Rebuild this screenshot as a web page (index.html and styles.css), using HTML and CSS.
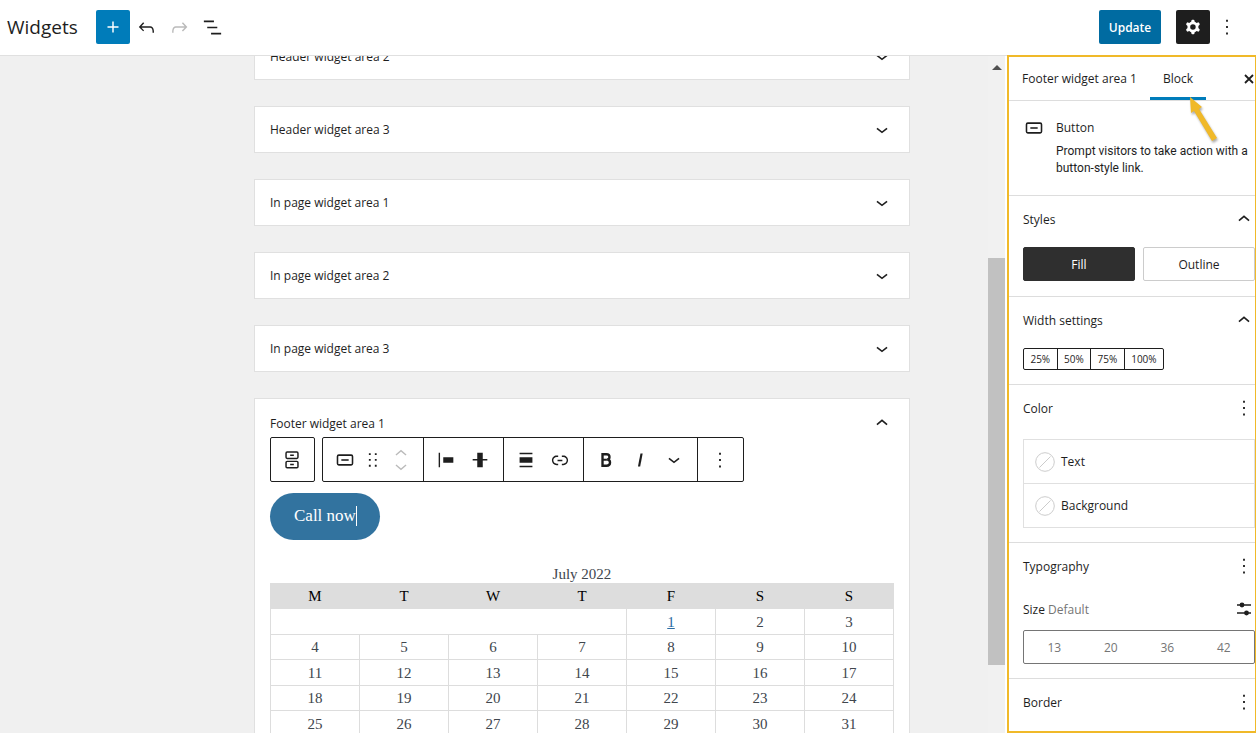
FILE: index.html
```
<!DOCTYPE html>
<html lang="en">
<head>
    <meta charset="UTF-8">
    <meta name="viewport" content="width=device-width, initial-scale=1.0">
    <title>Widgets</title>
    <link rel="stylesheet" href="styles.css">
</head>
<body>
    <header class="topbar">
        <h1>Widgets</h1>
        <button class="square add" aria-label="Add block">
            <svg width="22" height="22" viewBox="0 0 24 24"><path d="M12 6v12M6 12h12" stroke="#fff" stroke-width="1.6"/></svg>
        </button>
        <button class="icon-btn" aria-label="Undo">
            <svg width="23" height="23" viewBox="0 0 24 24"><path d="M18.3 11.7c-.6-.6-1.4-.9-2.3-.9H6.7l2.9-3.3-1.1-1-4.5 5L8.5 16l1-1-2.7-2.7H16c.5 0 .9.2 1.3.5 1 1 1 3.4 1 4.5v.3h1.5v-.2c0-1.5 0-4.3-1.5-5.7z"/></svg>
        </button>
        <button class="icon-btn faded" aria-label="Redo">
            <svg width="23" height="23" viewBox="0 0 24 24"><path d="M15.6 6.5l-1.1 1 2.9 3.3H8c-.9 0-1.7.3-2.3.9-1.4 1.5-1.4 4.2-1.4 5.6v.2h1.5v-.3c0-1.1 0-3.5 1-4.5.3-.3.7-.5 1.3-.5h9.2L14.5 15l1.1 1.1 4.6-4.6-4.6-5z"/></svg>
        </button>
        <button class="icon-btn" aria-label="List view">
            <svg width="23" height="23" viewBox="0 0 24 24"><path d="M3 5.6h10.500M6.500 12h10.500M10.500 18.400h10.500" fill="none" stroke="#1e1e1e" stroke-width="1.7"/></svg>
        </button>
        <div class="topbar-right">
            <button class="update">Update</button>
            <button class="square settings" aria-label="Settings">
                <svg width="22" height="22" viewBox="0 0 24 24"><path fill="#fff" fill-rule="evenodd" d="M10.289 4.836A1 1 0 0111.275 4h1.306a1 1 0 01.987.836l.244 1.466c.787.26 1.503.679 2.108 1.218l1.393-.522a1 1 0 011.216.437l.653 1.13a1 1 0 01-.23 1.273l-1.148.944a6.025 6.025 0 010 2.435l1.149.946a1 1 0 01.23 1.272l-.653 1.13a1 1 0 01-1.216.437l-1.394-.522c-.605.54-1.32.958-2.108 1.218l-.244 1.466a1 1 0 01-.987.836h-1.306a1 1 0 01-.986-.836l-.244-1.466a5.995 5.995 0 01-2.108-1.218l-1.394.522a1 1 0 01-1.217-.436l-.653-1.131a1 1 0 01.23-1.272l1.149-.946a6.026 6.026 0 010-2.435l-1.148-.944a1 1 0 01-.23-1.272l.653-1.131a1 1 0 011.217-.437l1.393.522a5.994 5.994 0 012.108-1.218l.244-1.466zM14.929 12a3 3 0 11-6 0 3 3 0 016 0z"/></svg>
            </button>
            <button class="icon-btn" aria-label="Options">
                <svg width="22" height="22" viewBox="0 0 24 24"><use href="#dots"/></svg>
            </button>
        </div>
    </header>

    <main class="layout">
        <section class="editor">
            <div class="areas">
                <div class="area">
                    <button class="area-title">Header widget area 2 <svg class="chev" viewBox="0 0 24 24"><use href="#down"/></svg></button>
                </div>
                <div class="area">
                    <button class="area-title">Header widget area 3 <svg class="chev" viewBox="0 0 24 24"><use href="#down"/></svg></button>
                </div>
                <div class="area">
                    <button class="area-title">In page widget area 1 <svg class="chev" viewBox="0 0 24 24"><use href="#down"/></svg></button>
                </div>
                <div class="area">
                    <button class="area-title">In page widget area 2 <svg class="chev" viewBox="0 0 24 24"><use href="#down"/></svg></button>
                </div>
                <div class="area">
                    <button class="area-title">In page widget area 3 <svg class="chev" viewBox="0 0 24 24"><use href="#down"/></svg></button>
                </div>
                <div class="area open">
                    <button class="area-title">Footer widget area 1 <svg class="chev" viewBox="0 0 24 24"><use href="#up"/></svg></button>
                    <div class="area-body">
                        <div class="toolbars">
                            <div class="toolbar parent">
                                <div class="group">
                                    <button class="tool" aria-label="Select Buttons">
                                        <svg viewBox="0 0 24 24"><g fill="none" stroke="#1e1e1e" stroke-width="1.6"><rect x="5.500" y="3.300" width="13" height="7" rx="1.200"/><rect x="5.500" y="13.500" width="13" height="7" rx="1.200"/><path d="M10 6.800h4M10 17h4"/></g></svg>
                                    </button>
                                </div>
                            </div>
                            <div class="toolbar">
                                <div class="group">
                                    <button class="tool" aria-label="Button"><svg viewBox="0 0 24 24"><use href="#button"/></svg></button>
                                    <button class="tool drag" aria-label="Drag">
                                        <svg viewBox="0 0 24 24"><path d="M7.500 4.500h2v2h-2zM14 4.500h2v2h-2zM7.500 10.900h2v2h-2zM14 10.900h2v2h-2zM7.500 17.300h2v2h-2zM14 17.300h2v2h-2z"/></svg>
                                    </button>
                                    <button class="tool faded" aria-label="Move">
                                        <svg viewBox="0 0 24 24"><path d="M6.500 6.500L12 1.800l5.500 4.700M6.500 17.500l5.500 4.700 5.500-4.700" fill="none" stroke="#1e1e1e" stroke-width="1.500"/></svg>
                                    </button>
                                </div>
                                <div class="group">
                                    <button class="tool" aria-label="Justify left">
                                        <svg viewBox="0 0 24 24"><path d="M4 4h1.500v16H4zM9 9h11v6H9z"/></svg>
                                    </button>
                                    <button class="tool" aria-label="Align middle">
                                        <svg viewBox="0 0 24 24"><path d="M20 11h-5V4H9v7H4v1.500h5V20h6v-7.500h5z"/></svg>
                                    </button>
                                </div>
                                <div class="group">
                                    <button class="tool" aria-label="Align">
                                        <svg viewBox="0 0 24 24"><path d="M5 15h14V9H5v6zm0 4.800h14v-1.500H5v1.500zM5 4.200v1.500h14V4.200H5z"/></svg>
                                    </button>
                                    <button class="tool" aria-label="Link">
                                        <svg viewBox="0 0 24 24"><path d="M15.600 7.200H14v1.500h1.600c2 0 3.700 1.700 3.700 3.700s-1.700 3.700-3.700 3.700H14v1.500h1.600c2.800 0 5.200-2.300 5.200-5.200 0-2.900-2.300-5.200-5.200-5.200zM4.700 12.400c0-2 1.700-3.700 3.700-3.700H10V7.200H8.400c-2.900 0-5.200 2.300-5.200 5.200 0 2.900 2.300 5.200 5.200 5.200H10v-1.500H8.400c-2 0-3.700-1.700-3.700-3.700zm4.600.9h5.300v-1.500H9.300v1.500z"/></svg>
                                    </button>
                                </div>
                                <div class="group">
                                    <button class="tool" aria-label="Bold">
                                        <svg viewBox="0 0 24 24"><path d="M8.200 5.700h4.300c2.200 0 3.300 1.100 3.300 2.900 0 1.500-.9 2.600-2.400 2.900 1.900.2 3 1.400 3 3.100 0 2.200-1.400 3.600-3.800 3.600H8.200z" fill="none" stroke="#1e1e1e" stroke-width="2.600"/><path d="M8 11.700h5" stroke="#1e1e1e" stroke-width="2.200"/></svg>
                                    </button>
                                    <button class="tool" aria-label="Italic">
                                        <svg viewBox="0 0 24 24"><path d="M12.500 5h2.400l-2.700 14H9.800z"/></svg>
                                    </button>
                                    <button class="tool" aria-label="More"><svg viewBox="0 0 24 24"><use href="#down"/></svg></button>
                                </div>
                                <div class="group">
                                    <button class="tool" aria-label="Options"><svg viewBox="0 0 24 24"><use href="#dots"/></svg></button>
                                </div>
                            </div>
                        </div>

                        <a class="call" href="#"><span class="caret">Call now</span></a>

                        <table class="calendar">
                            <caption>July 2022</caption>
                            <thead>
                                <tr><th>M</th><th>T</th><th>W</th><th>T</th><th>F</th><th>S</th><th>S</th></tr>
                            </thead>
                            <tbody>
                                <tr><td colspan="4"></td><td><a href="#">1</a></td><td>2</td><td>3</td></tr>
                                <tr><td>4</td><td>5</td><td>6</td><td>7</td><td>8</td><td>9</td><td>10</td></tr>
                                <tr><td>11</td><td>12</td><td>13</td><td>14</td><td>15</td><td>16</td><td>17</td></tr>
                                <tr><td>18</td><td>19</td><td>20</td><td>21</td><td>22</td><td>23</td><td>24</td></tr>
                                <tr><td>25</td><td>26</td><td>27</td><td>28</td><td>29</td><td>30</td><td>31</td></tr>
                            </tbody>
                        </table>
                    </div>
                </div>
            </div>
        </section>

        <div class="scrollbar">
            <div class="scroll-arrow"></div>
            <div class="scroll-before"></div>
            <div class="scroll-thumb"></div>
            <div class="scroll-after"></div>
        </div>

        <aside class="sidebar">
            <div class="tabs">
                <button class="tab">Footer widget area 1</button>
                <button class="tab active">Block</button>
                <button class="close" aria-label="Close settings">
                    <svg width="12" height="12" viewBox="0 0 12 12"><path d="M2 2l8 8M10 2l-8 8" stroke="#1e1e1e" stroke-width="1.800"/></svg>
                </button>
                <svg class="arrow" width="44" height="56" viewBox="0 0 44 56">
                    <path d="M8 4l1 16 3-2 18 30 5-3-18-29 3-2z" fill="#f0b929"/>
                </svg>
            </div>

            <div class="card">
                <svg width="22" height="22" viewBox="0 0 24 24"><use href="#button"/></svg>
                <div>
                    <h2>Button</h2>
                    <p>Prompt visitors to take action with a button-style link.</p>
                </div>
            </div>

            <div class="panel">
                <button class="panel-title">Styles <svg class="chev" viewBox="0 0 24 24"><use href="#up"/></svg></button>
                <div class="styles">
                    <button class="style selected">Fill</button>
                    <button class="style">Outline</button>
                </div>
            </div>

            <div class="panel">
                <button class="panel-title">Width settings <svg class="chev" viewBox="0 0 24 24"><use href="#up"/></svg></button>
                <div class="widths">
                    <button>25%</button>
                    <button>50%</button>
                    <button>75%</button>
                    <button>100%</button>
                </div>
            </div>

            <div class="panel">
                <button class="panel-title">Color <svg class="chev" viewBox="0 0 24 24"><use href="#dots"/></svg></button>
                <div class="colors">
                    <button><svg width="20" height="20" viewBox="0 0 20 20"><use href="#none"/></svg>Text</button>
                    <button><svg width="20" height="20" viewBox="0 0 20 20"><use href="#none"/></svg>Background</button>
                </div>
            </div>

            <div class="panel">
                <button class="panel-title">Typography <svg class="chev" viewBox="0 0 24 24"><use href="#dots"/></svg></button>
                <div class="size-row">
                    <span>Size <span class="muted">Default</span></span>
                    <button aria-label="Set custom size">
                        <svg width="16" height="16" viewBox="0 0 16 16"><path d="M1 4h14M1 12h14" stroke="#1e1e1e" stroke-width="1.500"/><circle cx="6" cy="4" r="2.400"/><circle cx="10.500" cy="12" r="2.400"/></svg>
                    </button>
                </div>
                <div class="sizes">
                    <button>13</button>
                    <button>20</button>
                    <button>36</button>
                    <button>42</button>
                </div>
            </div>

            <div class="panel">
                <button class="panel-title">Border <svg class="chev" viewBox="0 0 24 24"><use href="#dots"/></svg></button>
            </div>
        </aside>
    </main>

    <!-- shared icons -->
    <svg class="defs" width="0" height="0">
        <symbol id="down" viewBox="0 0 24 24"><path d="M6.500 10.300l5.500 4.200 5.500-4.200" fill="none" stroke="#1e1e1e" stroke-width="1.800"/></symbol>
        <symbol id="up" viewBox="0 0 24 24"><path d="M6.500 13.700L12 9.200l5.500 4.500" fill="none" stroke="#1e1e1e" stroke-width="1.800"/></symbol>
        <symbol id="dots" viewBox="0 0 24 24"><path d="M11 4h2v2.200h-2zM11 11h2v2.200h-2zM11 18h2v2.200h-2z"/></symbol>
        <symbol id="button" viewBox="0 0 24 24"><rect x="3.800" y="6.700" width="16.400" height="10.600" rx="1.500" fill="none" stroke="#1e1e1e" stroke-width="1.700"/><path d="M8 12h8" stroke="#1e1e1e" stroke-width="1.700"/></symbol>
        <symbol id="none" viewBox="0 0 20 20"><circle cx="10" cy="10" r="9.300" fill="#fff" stroke="#ccc"/><path d="M4.500 15.500l11-11" stroke="#ccc"/></symbol>
    </svg>
</body>
</html>
```

FILE: styles.css
```
* {
    box-sizing: border-box;
}
body {
    margin: 0;
    height: 100vh;
    display: flex;
    flex-direction: column;
    overflow: hidden;
    background-color: white;
    color: #1e1e1e;
    font-family: "Open Sans", "Noto Sans", sans-serif;
    font-size: 12px;
}
button {
    margin: 0;
    padding: 0;
    border: none;
    background: none;
    color: inherit;
    font: inherit;
    cursor: pointer;
}
svg {
    display: block;
    flex-shrink: 0;
    fill: #1e1e1e;
}
.defs {
    position: absolute;
}

/* top bar */
.topbar {
    display: flex;
    align-items: center;
    height: 56px;
    padding: 0 12px 1px 7px;
    border-bottom: 1px solid #e0e0e0;
}
.topbar h1 {
    width: 89px;
    margin: 0;
    font-size: 19px;
    font-weight: 400;
}
.square,
.icon-btn {
    display: flex;
    align-items: center;
    justify-content: center;
    width: 34px;
    height: 34px;
    border-radius: 2px;
}
.icon-btn {
    width: 33px;
}
.add {
    background-color: #007cba;
}
.settings {
    margin-left: 15px;
    background-color: #1e1e1e;
}
.faded {
    opacity: 0.3;
}
.topbar-right {
    display: flex;
    margin-left: auto;
    padding-right: 1px;
}
.update {
    width: 62px;
    height: 34px;
    border-radius: 2px;
    background-color: #006ba1;
    color: white;
    font-weight: 600;
}

/* editor */
.layout {
    display: flex;
    flex: 1;
    min-height: 0;
}
.editor {
    flex: 1;
    min-width: 0;
    overflow: hidden;
    background-color: #f0f0f0;
}
.areas {
    display: flex;
    flex-direction: column;
    gap: 26px;
    margin: -23px 78px 0 254px;
}
.area {
    border: 1px solid #e0e0e0;
    background-color: white;
}
.area-title {
    display: flex;
    align-items: center;
    justify-content: space-between;
    width: 100%;
    height: 45px;
    padding: 0 16px 0 15px;
}
.open .area-title {
    height: 38px;
    padding-top: 10px;
}
.chev {
    width: 22px;
    height: 22px;
}
.area-body {
    padding: 0 15px 15px;
}
.toolbars {
    display: flex;
    gap: 7px;
}
.toolbar {
    display: flex;
    height: 45px;
    border: 1px solid #1e1e1e;
    border-radius: 2px;
}
.group {
    display: flex;
    padding: 0 5px;
}
.parent .group {
    padding: 0 5px 0 4px;
}
.group + .group {
    padding-right: 6px;
    border-left: 1px solid #1e1e1e;
}
.tool {
    display: flex;
    align-items: center;
    justify-content: center;
    width: 34px;
}
.tool svg {
    width: 22px;
    height: 22px;
}
.drag {
    width: 22px;
}
.call {
    display: inline-flex;
    align-items: center;
    height: 47px;
    margin-top: 11px;
    padding: 0 23px 2px 24px;
    border-radius: 24px;
    background-color: #32739f;
    color: white;
    font-family: "Liberation Serif", serif;
    font-size: 17px;
    text-decoration: none;
}
.caret {
    border-right: 1px solid white;
}
.calendar {
    width: 100%;
    margin-top: 25px;
    border-collapse: collapse;
    table-layout: fixed;
    color: #40464d;
    font-family: "Liberation Serif", serif;
    font-size: 15px;
    line-height: 18px;
    text-align: center;
}
.calendar th {
    height: 25px;
    padding: 0;
    border: 1px solid #ddd;
    background-color: #ddd;
    color: black;
    font-weight: 400;
}
.calendar td {
    height: 25px;
    padding: 0;
    border: 1px solid #ddd;
}
.calendar tbody tr:nth-child(odd) td {
    height: 26px;
}
.calendar a {
    color: #2b6ca3;
}

/* scrollbar */
.scrollbar {
    display: flex;
    flex-direction: column;
    width: 17px;
    margin-right: 2px;
    background-color: #f1f1f1;
}
.scroll-arrow {
    width: 0;
    margin: 9px auto 10px;
    border: 5px solid transparent;
    border-top: none;
    border-bottom-color: #505050;
}
.scroll-before {
    flex: 178;
}
.scroll-thumb {
    flex: 407;
    background-color: #c1c1c1;
}
.scroll-after {
    flex: 68;
}

/* settings sidebar */
.sidebar {
    width: 249px;
    margin-top: -1px;
    overflow: hidden;
    border: 2px solid #f0b929;
    border-right-width: 1px;
}
.tabs {
    position: relative;
    display: flex;
    height: 44px;
    border-bottom: 1px solid #ddd;
}
.tab {
    padding: 0 13px;
    white-space: nowrap;
}
.active {
    border-bottom: 3px solid #007cba;
    padding-top: 3px;
    font-weight: 500;
}
.close {
    margin-left: auto;
}
.arrow {
    position: absolute;
    top: 36px;
    right: 29px;
    filter: drop-shadow(1px 2px 1px #aaa);
}
.card {
    display: flex;
    gap: 11px;
    height: 95px;
    padding: 16px 0 0 14px;
    border-bottom: 1px solid #ddd;
}
.card h2 {
    margin: 2px 0 7px;
    font-size: 12px;
    font-weight: 500;
    line-height: 17px;
}
.card p {
    margin: 0;
    font-family: Roboto, sans-serif;
    line-height: 17px;
}
.panel {
    padding: 0 0 14px 14px;
    border-bottom: 1px solid #ddd;
}
.panel:last-child {
    border-bottom: none;
}
.panel-title {
    display: flex;
    align-items: center;
    justify-content: space-between;
    width: 100%;
    height: 48px;
    padding-bottom: 2px;
    font-weight: 500;
}
.styles {
    display: grid;
    grid-template-columns: 1fr 1fr;
    gap: 8px;
    padding: 3px 0 1px;
}
.style {
    height: 34px;
    border: 1px solid #ccc;
    border-radius: 2px;
}
.selected {
    border-color: #2f2f2f;
    background-color: #2f2f2f;
    color: white;
}
.widths {
    display: flex;
    width: 141px;
    height: 22px;
    margin-top: 3px;
    border: 1px solid #1e1e1e;
    border-radius: 2px;
    font-size: 10px;
}
.widths button {
    flex: 1 1 auto;
}
.widths button + button {
    border-left: 1px solid #1e1e1e;
}
.colors {
    margin-top: 6px;
    border: 1px solid #e0e0e0;
}
.colors button {
    display: flex;
    align-items: center;
    gap: 6px;
    width: 100%;
    height: 43px;
    padding-left: 11px;
}
.colors button + button {
    height: 44px;
    border-top: 1px solid #e0e0e0;
}
.size-row {
    display: flex;
    align-items: center;
    justify-content: space-between;
    height: 36px;
    padding-right: 3px;
}
.muted {
    color: #757575;
}
.sizes {
    display: grid;
    grid-template-columns: repeat(4, 1fr);
    height: 34px;
    margin-top: 3px;
    padding: 0 2px;
    border: 1px solid #757575;
    border-radius: 2px;
    color: #757575;
}
```
